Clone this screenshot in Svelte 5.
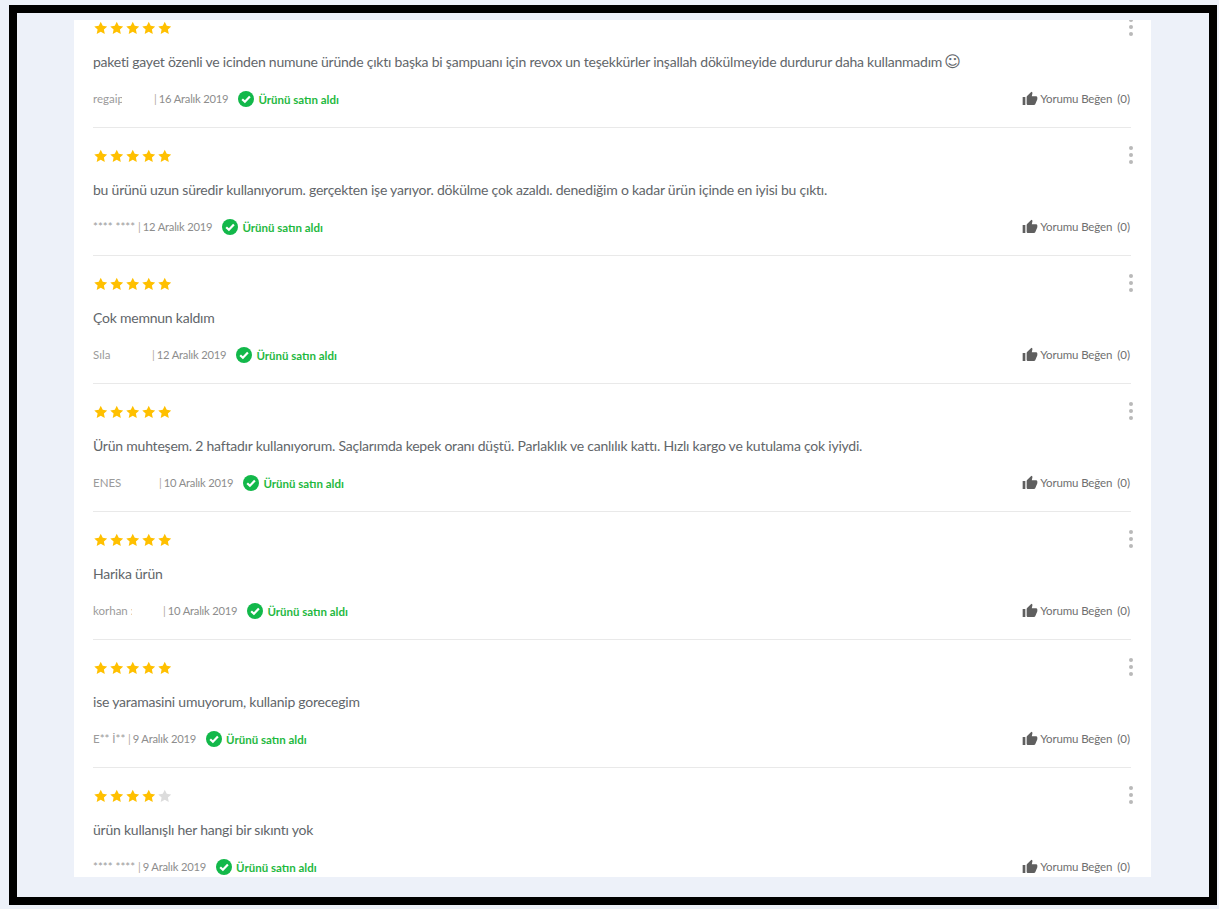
<script>
  const reviews = [
    { stars: 5, text: 'paketi gayet özenli ve icinden numune üründe çıktı başka bi şampuanı için revox un teşekkürler inşallah dökülmeyide durdurur daha kullanmadım', smile: true, name: 'regaip', width: 29, gap: 32, date: '16 Aralık 2019' },
    { stars: 5, text: 'bu ürünü uzun süredir kullanıyorum. gerçekten işe yarıyor. dökülme çok azaldı. denediğim o kadar ürün içinde en iyisi bu çıktı.', name: '**** ****', date: '12 Aralık 2019', width: 42, gap: 3 },
    { stars: 5, text: 'Çok memnun kaldım', name: 'Sıla', date: '12 Aralık 2019', width: 19, gap: 40 },
    { stars: 5, text: 'Ürün muhteşem. 2 haftadır kullanıyorum. Saçlarımda kepek oranı düştü. Parlaklık ve canlılık kattı. Hızlı kargo ve kutulama çok iyiydi.', name: 'ENES', date: '10 Aralık 2019', width: 29, gap: 37, hidePipe: true },
    { stars: 5, text: 'Harika ürün', name: 'korhan :', date: '10 Aralık 2019', width: 39, gap: 31 },
    { stars: 5, text: 'ise yaramasini umuyorum, kullanip gorecegim', name: 'E** İ**', date: '9 Aralık 2019', width: 32, gap: 3 },
    { stars: 4, text: 'ürün kullanışlı her hangi bir sıkıntı yok', name: '**** ****', date: '9 Aralık 2019', width: 42, gap: 3 }
  ];
  const five = [1, 2, 3, 4, 5];
</script>

<div class="frame">
  <div class="card">
    <div class="list">
      {#each reviews as r}
        <article class="review">
          <div class="top">
            <div class="stars">
              {#each five as n}
                <svg class="star" class:off={n > r.stars} viewBox="0 0 24 24"><path d="M12 .8l3.5 7.4 8 1-5.9 5.5 1.6 8L12 18.7l-7.2 4 1.6-8L.5 9.2l8-1z" /></svg>
              {/each}
            </div>
            <div class="dots"><i></i><i></i><i></i></div>
          </div>
          <p class="text">{r.text}{#if r.smile}<span class="smile">☺</span>{/if}</p>
          <div class="meta">
            <span class="name" style="width:{r.width}px;margin-right:{r.gap}px">{r.name}</span>
            <span class="pipe" class:short={r.hidePipe}>|</span>
            <span class="date">{r.date}</span>
            <svg class="check" viewBox="0 0 16 16"><circle cx="8" cy="8" r="8" /><path d="M4.2 8.2l2.7 2.6 5-5.3" /></svg>
            <span class="bought">Ürünü satın aldı</span>
            <span class="like">
              <svg class="thumb" viewBox="0 0 24 24"><path d="M1 21h4V9H1v12zm22-11c0-1.1-.9-2-2-2h-6.31l.95-4.57.03-.32c0-.41-.17-.79-.44-1.06L14.17 1 7.59 7.59C7.22 7.95 7 8.45 7 9v10c0 1.1.9 2 2 2h9c.83 0 1.54-.5 1.84-1.22l3.02-7.05c.09-.23.14-.47.14-.73v-2z" /></svg>
              <span class="like-label">Yorumu Beğen</span>
              <span class="count">(0)</span>
            </span>
          </div>
        </article>
      {/each}
    </div>
  </div>
</div>

<style>
  :global(body) {
    margin: 0;
    background: #edf1f9;
  }
  .frame {
    box-sizing: border-box;
    width: 1208px;
    height: 900px;
    margin: 5px 0 0 9px;
    border: 8px solid #000;
    padding: 7px 58px 20px 57px;
    background: #edf1f9;
    font-family: Lato, sans-serif;
  }
  .card {
    height: 857px;
    overflow: hidden;
    background: #fff;
  }
  .list {
    margin-top: -20px;
    padding: 0 20px 0 19px;
  }
  .review {
    box-sizing: border-box;
    height: 128px;
    border-bottom: 1px solid #e9e9e9;
    padding-top: 21px;
  }
  .review:last-child {
    border-bottom: 0;
  }
  .top {
    display: flex;
    justify-content: space-between;
    height: 16px;
  }
  .stars {
    display: flex;
    gap: 2.5px;
    padding-left: 0.5px;
  }
  .star {
    width: 13.5px;
    height: 14px;
    fill: #ffc000;
  }
  .star.off {
    fill: #dcdcdc;
  }
  .dots {
    display: flex;
    flex-direction: column;
    gap: 3px;
    width: 4px;
    margin: -3px -2px 0 0;
  }
  .dots i {
    width: 4px;
    height: 4px;
    border-radius: 50%;
    background: #b9b9b9;
  }
  .text {
    margin: 13px 0 0;
    height: 24px;
    font-size: 14px;
    letter-spacing: -0.225px;
    line-height: 24px;
    color: #62666a;
    white-space: nowrap;
  }
  .smile {
    margin-left: 2px;
    font-family: "DejaVu Sans", sans-serif;
    font-size: 16px;
    line-height: 16px;
    letter-spacing: 0;
  }
  .meta {
    display: flex;
    align-items: center;
    height: 20px;
    margin-top: 14px;
    font-size: 11px;
    color: #9b9b9b;
  }
  .name {
    flex: none;
    overflow: hidden;
    font-size: 11.5px;
    white-space: nowrap;
  }
  .pipe {
    color: #b4a89a;
    margin-right: 2px;
  }
  .pipe.short {
    height: 6px;
    margin-top: 8px;
    line-height: 0;
  }
  .date {
    margin-right: 10px;
    letter-spacing: -0.2px;
    font-size: 11.2px;
    color: #8d8d8d;
  }
  .check {
    width: 16px;
    height: 16px;
    margin: 2px 4px 0 0;
    flex: none;
  }
  .check circle {
    fill: #12b84a;
  }
  .check path {
    fill: none;
    stroke: #fff;
    stroke-width: 2.2;
  }
  .bought {
    margin-top: 2px;
    font-size: 11.5px;
    font-weight: 700;
    color: #1fb93f;
  }
  .like {
    display: flex;
    align-items: center;
    margin: 0 1px 0 auto;
    font-size: 11.5px;
    color: #6f6f6f;
  }
  .like-label {
    letter-spacing: -0.15px;
  }
  .thumb {
    width: 16px;
    height: 16px;
    margin: 2px 2px 0 0;
    fill: #5f5f5f;
  }
  .count {
    margin-left: 5px;
  }
</style>
